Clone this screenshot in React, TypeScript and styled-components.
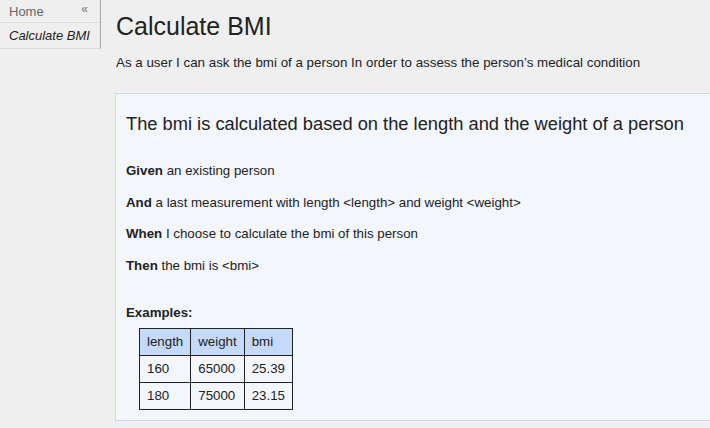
import React from "react";
import styled, { createGlobalStyle } from "styled-components";

const Global = createGlobalStyle`
  html, body { margin: 0; padding: 0; background: #efefef; overflow: hidden; }
  body { font-family: "Liberation Sans", Arial, sans-serif; color: #222; }
`;

const Page = styled.div`
  display: flex;
  align-items: flex-start;
  width: 710px;
  height: 428px;
  overflow: hidden;
`;

const Sidebar = styled.nav`
  width: 100px;
  flex: none;
  border-right: 1px solid #a8a8a8;
  border-bottom: 1px solid #dcdcdc;
  display: flex;
  flex-direction: column;
`;

const NavItem = styled.div<{ $italic?: boolean; $last?: boolean }>`
  display: flex;
  align-items: center;
  justify-content: space-between;
  white-space: nowrap;
  height: ${(p) => (p.$last ? "25px" : "22px")};
  padding: 0 ${(p) => (p.$last ? "4px" : "12px")} 0 9px;
  font-size: 13px;
  font-style: ${(p) => (p.$italic ? "italic" : "normal")};
  color: ${(p) => (p.$italic ? "#222" : "#666")};
  border-bottom: ${(p) => (p.$last ? "none" : "1px solid #dcdcdc")};
`;

const Collapse = styled.span`
  font-size: 12px;
  color: #777;
  margin-top: -5px;
`;

const Main = styled.main`
  flex: none;
  width: 640px;
  padding-left: 14px;
`;

const Title = styled.h1`
  margin: 12px 0 0 1px;
  font-size: 25px;
  font-weight: normal;
  line-height: 28px;
  color: #222;
`;

const Subtitle = styled.p`
  margin: 13px 0 0 1px;
  font-size: 13.35px;
  line-height: 20px;
  color: #222;
`;

const Card = styled.section`
  margin-top: 20px;
  width: 640px;
  height: 328px;
  background: #f3f6fb;
  border: 1px solid #c6d8f6;
  border-right: none;
  padding: 18px 0 0 10px;
  box-sizing: border-box;
`;

const CardTitle = styled.h2`
  margin: 0;
  font-size: 18.3px;
  font-weight: normal;
  line-height: 24px;
  color: #222;
`;

const Steps = styled.div`
  margin-top: 25px;
  display: flex;
  flex-direction: column;
  gap: 12.5px;
`;

const Step = styled.p`
  margin: 0;
  font-size: 13.3px;
  line-height: 19px;
  color: #222;
`;

const Keyword = styled.b`
  font-weight: bold;
`;

const ExamplesLabel = styled.p`
  margin: 28px 0 0 0;
  font-size: 13.3px;
  font-weight: bold;
  line-height: 19px;
`;

const Table = styled.table`
  margin: 6px 0 0 13px;
  border-collapse: collapse;
  font-size: 13.3px;
  color: #222;
`;

const Th = styled.th`
  background: #c5d9fa;
  font-weight: normal;
  text-align: left;
  height: 26px;
  padding: 0 7px 0 7px;
  border: 1px solid #222;
`;

const Td = styled.td`
  height: 26px;
  padding: 0 7px 0 7px;
  border: 1px solid #222;
`;

const examples = [
  ["160", "65000", "25.39"],
  ["180", "75000", "23.15"],
];

const steps: [string, string][] = [
  ["Given", " an existing person"],
  ["And", " a last measurement with length <length> and weight <weight>"],
  ["When", " I choose to calculate the bmi of this person"],
  ["Then", " the bmi is <bmi>"],
];

export default function App() {
  return (
    <>
      <Global />
      <Page>
        <Sidebar>
          <NavItem>
            <span>Home</span>
            <Collapse>«</Collapse>
          </NavItem>
          <NavItem $italic $last>
            <span>Calculate BMI</span>
          </NavItem>
        </Sidebar>
        <Main>
          <Title>Calculate BMI</Title>
          <Subtitle>
            As a user I can ask the bmi of a person In order to assess the person’s medical condition
          </Subtitle>
          <Card>
            <CardTitle>The bmi is calculated based on the length and the weight of a person</CardTitle>
            <Steps>
              {steps.map(([k, t]) => (
                <Step key={k}>
                  <Keyword>{k}</Keyword>
                  {t}
                </Step>
              ))}
            </Steps>
            <ExamplesLabel>Examples:</ExamplesLabel>
            <Table>
              <thead>
                <tr>
                  <Th>length</Th>
                  <Th>weight</Th>
                  <Th>bmi</Th>
                </tr>
              </thead>
              <tbody>
                {examples.map((row) => (
                  <tr key={row[0]}>
                    {row.map((c, i) => (
                      <Td key={i}>{c}</Td>
                    ))}
                  </tr>
                ))}
              </tbody>
            </Table>
          </Card>
        </Main>
      </Page>
    </>
  );
}
